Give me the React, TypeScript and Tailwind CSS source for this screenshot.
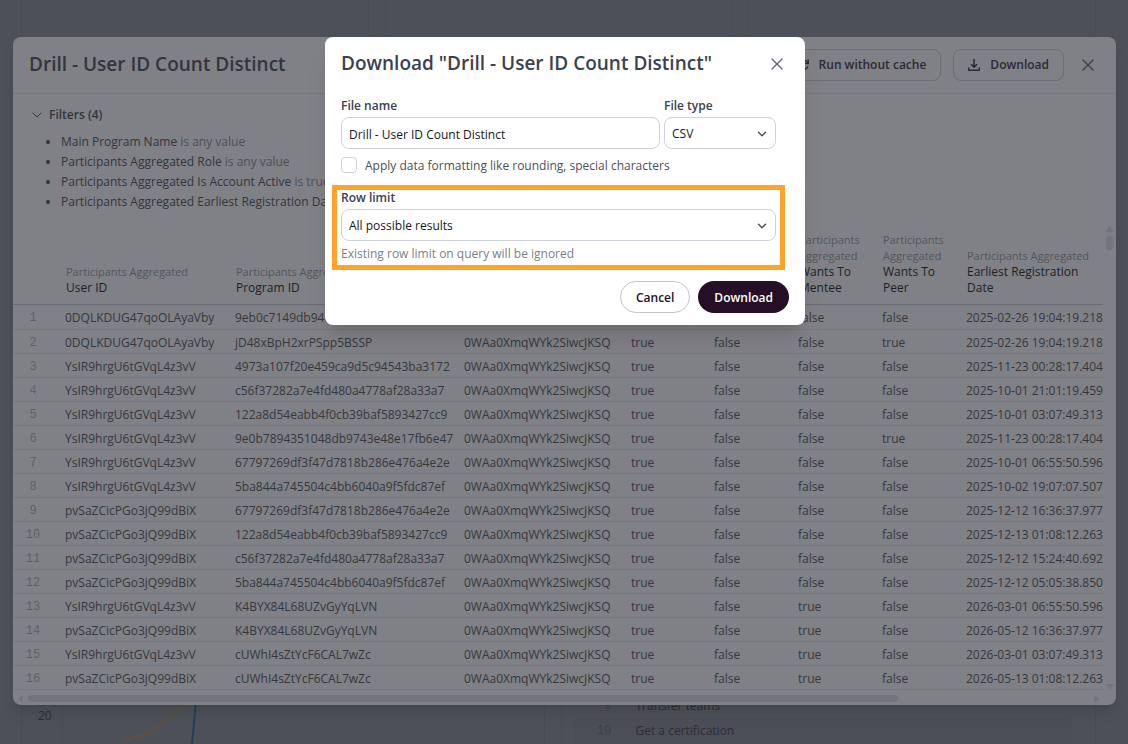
import React, { useState } from 'react';
import clsx from 'clsx';
import { X, ChevronDown } from 'lucide-react';

interface Row {
  user: string;
  program: string;
  mentee: boolean;
  peer: boolean;
  date: string;
}

interface Column {
  group?: string;
  label?: string;
  width: string;
}

const OWNER_ID = '0WAa0XmqWYk2SiwcJKSQ';

const columns: Column[] = [
  { group: 'Participants Aggregated', label: 'User ID', width: 'w-[170px]' },
  { group: 'Participants Aggregated', label: 'Program ID', width: 'w-[229px]' },
  { width: 'w-[167px]' },
  { width: 'w-[83px]' },
  { width: 'w-[84px]' },
  { group: 'Participants Aggregated', label: 'Wants To Mentee', width: 'w-[84px]' },
  { group: 'Participants Aggregated', label: 'Wants To Peer', width: 'w-[84px]' },
  { group: 'Participants Aggregated', label: 'Earliest Registration Date', width: '' },
];

const rows: Row[] = [
  { user: '0DQLKDUG47qoOLAyaVby', program: '9eb0c7149db946', mentee: false, peer: false, date: '2025-02-26 19:04:19.218' },
  { user: '0DQLKDUG47qoOLAyaVby', program: 'jD48xBpH2xrPSpp5BSSP', mentee: false, peer: true, date: '2025-02-26 19:04:19.218' },
  { user: 'YsIR9hrgU6tGVqL4z3vV', program: '4973a107f20e459ca9d5c94543ba3172', mentee: false, peer: false, date: '2025-11-23 00:28:17.404' },
  { user: 'YsIR9hrgU6tGVqL4z3vV', program: 'c56f37282a7e4fd480a4778af28a33a7', mentee: false, peer: false, date: '2025-10-01 21:01:19.459' },
  { user: 'YsIR9hrgU6tGVqL4z3vV', program: '122a8d54eabb4f0cb39baf5893427cc9', mentee: false, peer: false, date: '2025-10-01 03:07:49.313' },
  { user: 'YsIR9hrgU6tGVqL4z3vV', program: '9e0b7894351048db9743e48e17fb6e47', mentee: false, peer: true, date: '2025-11-23 00:28:17.404' },
  { user: 'YsIR9hrgU6tGVqL4z3vV', program: '67797269df3f47d7818b286e476a4e2e', mentee: false, peer: false, date: '2025-10-01 06:55:50.596' },
  { user: 'YsIR9hrgU6tGVqL4z3vV', program: '5ba844a745504c4bb6040a9f5fdc87ef', mentee: false, peer: false, date: '2025-10-02 19:07:07.507' },
  { user: 'pvSaZCicPGo3jQ99dBiX', program: '67797269df3f47d7818b286e476a4e2e', mentee: false, peer: false, date: '2025-12-12 16:36:37.977' },
  { user: 'pvSaZCicPGo3jQ99dBiX', program: '122a8d54eabb4f0cb39baf5893427cc9', mentee: false, peer: false, date: '2025-12-13 01:08:12.263' },
  { user: 'pvSaZCicPGo3jQ99dBiX', program: 'c56f37282a7e4fd480a4778af28a33a7', mentee: false, peer: false, date: '2025-12-12 15:24:40.692' },
  { user: 'pvSaZCicPGo3jQ99dBiX', program: '5ba844a745504c4bb6040a9f5fdc87ef', mentee: false, peer: false, date: '2025-12-12 05:05:38.850' },
  { user: 'YsIR9hrgU6tGVqL4z3vV', program: 'K4BYX84L68UZvGyYqLVN', mentee: true, peer: false, date: '2026-03-01 06:55:50.596' },
  { user: 'pvSaZCicPGo3jQ99dBiX', program: 'K4BYX84L68UZvGyYqLVN', mentee: true, peer: false, date: '2026-05-12 16:36:37.977' },
  { user: 'YsIR9hrgU6tGVqL4z3vV', program: 'cUWhI4sZtYcF6CAL7wZc', mentee: true, peer: false, date: '2026-03-01 03:07:49.313' },
  { user: 'pvSaZCicPGo3jQ99dBiX', program: 'cUWhI4sZtYcF6CAL7wZc', mentee: true, peer: false, date: '2026-05-13 01:08:12.263' },
];

const filters = [
  { field: 'Main Program Name', condition: 'is any value' },
  { field: 'Participants Aggregated Role', condition: 'is any value' },
  { field: 'Participants Aggregated Is Account Active', condition: 'is true' },
  { field: 'Participants Aggregated Earliest Registration Date', condition: '' },
];

const Dashboard: React.FC = () => (
  <div className="flex h-screen flex-col justify-between overflow-hidden pl-[21px] pr-8 text-xs text-[#2b2d34]">
    <div className="flex h-9 gap-4">
      <div className="flex-1 border-x border-[#4a4c54]" />
      <div className="flex-1 border-x border-[#4a4c54]" />
      <div className="flex-1 border-x border-[#4a4c54]" />
    </div>
    <div className="flex h-[44px] gap-4">
      <div className="flex flex-1 border-x border-[#4a4c54]">
        <span className="w-10 pt-2 pl-4 leading-4">20</span>
        <svg className="h-full w-[140px] border-l border-[#4a4c54]" viewBox="0 0 140 44" fill="none" aria-hidden="true">
          <path d="M62 44 71 36h9l12-6 8-8 7-4 8-8 15-7" stroke="#5e5238" strokeWidth="2" />
          <path d="M130 44 134 0" stroke="#1f405c" strokeWidth="2" />
        </svg>
      </div>
      <ol className="flex-1 border-x border-[#4a4c54] pl-3">
        <li className="flex h-[18px] items-end gap-6 pl-[22px]">
          <span className="w-4 text-right font-['Liberation_Mono'] leading-6 text-[#3d4047]">9</span>
          <span className="leading-6">Transfer teams</span>
        </li>
        <li className="mr-6 flex h-[26px] items-center gap-6 bg-[#4b4e56] pl-[22px]">
          <span className="w-4 text-right font-['Liberation_Mono'] text-[#3d4047]">10</span>
          <span>Get a certification</span>
        </li>
      </ol>
    </div>
  </div>
);

const DrillTable: React.FC = () => (
  <table className="w-full table-fixed border-collapse text-left">
    <thead>
      <tr className="h-[81px] border-b border-[#686b75] align-bottom leading-4">
        <th className="w-[44px]" aria-label="Row" />
        {columns.map((col, i) => (
          <th key={i} className={clsx('pb-2 pl-[9px] font-normal', col.width)}>
            <span className="block text-[11px] text-[#54565d]">{col.group}</span>
            <span className="block text-[#1d1f24]">{col.label}</span>
          </th>
        ))}
      </tr>
    </thead>
    <tbody className="text-[#35373d]">
      {rows.map((row, i) => (
        <tr key={i} className="h-6 border-b border-[#76787e] leading-4 first:h-[25px] *:pt-0.5">
          <td className="pr-1 text-center font-['Liberation_Mono'] text-[#5f6168]">{i + 1}</td>
          <td className="pl-2">{row.user}</td>
          <td className="pl-2">{row.program}</td>
          <td className="pl-2">{OWNER_ID}</td>
          <td className="pl-2">true</td>
          <td className="pl-2">false</td>
          <td className="pl-2">{String(row.mentee)}</td>
          <td className="pl-2">{String(row.peer)}</td>
          <td className="pl-2 whitespace-nowrap">{row.date}</td>
        </tr>
      ))}
    </tbody>
  </table>
);

const DrillModal: React.FC = () => (
  <div className="absolute inset-0 flex pt-[37px] pr-3 pb-[39px] pl-[13px]">
    <section aria-label="Drill results" className="flex min-w-0 flex-1 flex-col overflow-hidden rounded-lg bg-[#808186] text-xs text-[#33353d] shadow-lg">
      <header className="flex h-[57px] shrink-0 items-center justify-between border-b border-[#76787f] pr-[18px] pl-4">
        <h1 className="text-[19px] font-semibold">Drill - User ID Count Distinct</h1>
        <div className="flex items-center gap-3 font-semibold text-[#2d2935]">
          <button type="button" className="flex h-8 items-center gap-[10px] rounded-lg border border-[#6c6e76] px-[14px]">
            <svg className="size-3" viewBox="0 0 12 12" fill="none" stroke="currentColor" strokeWidth="1.5" aria-hidden="true">
              <path d="M10.700 7.500A5 5 0 1 1 10.300 3.500L11 4.500" />
              <path d="M11.200 0.500v4h-4" />
            </svg>
            Run without cache
          </button>
          <button type="button" className="flex h-8 items-center gap-[10px] rounded-lg border border-[#6c6e76] px-[14px]">
            <svg className="size-3" viewBox="0 0 12 12" fill="none" stroke="currentColor" strokeWidth="1.5" strokeLinejoin="round" aria-hidden="true">
              <path d="M6 0v8M3 5.200 6 8.200 9 5.200M0.800 8.500v2.700h10.400V8.500" />
            </svg>
            Download
          </button>
          <button type="button" aria-label="Close drill" className="ml-[2px] text-[#3a3d45]">
            <X className="size-5" strokeWidth={1.5} />
          </button>
        </div>
      </header>
      <div className="flex-1 px-4 pt-3">
        <button type="button" className="flex items-center gap-1 font-semibold leading-[18px]">
          <ChevronDown className="size-4" strokeWidth={1.5} />
          Filters (4)
        </button>
        <ul className="list-disc pt-2 pl-8 leading-5">
          {filters.map(f => (
            <li key={f.field}>
              {f.field} <span className="text-[#4d5058]">{f.condition}</span>
            </li>
          ))}
        </ul>
      </div>
      <div className="flex shrink-0">
        <div className="min-w-0 flex-1">
          <DrillTable />
        </div>
        <div className="flex w-[13px] flex-col items-center justify-between text-[#73757e]">
          <div className="flex flex-col items-center gap-1 pt-0.5">
            <svg className="h-[6px] w-2" viewBox="0 0 8 6" fill="currentColor" aria-hidden="true"><path d="M4 0 8 6H0z" /></svg>
            <div className="h-[14px] w-[7px] rounded-full bg-current" />
          </div>
          <svg className="h-[6px] w-2" viewBox="0 0 8 6" fill="currentColor" aria-hidden="true"><path d="M4 6 8 0H0z" /></svg>
        </div>
      </div>
      <div className="flex h-[15px] shrink-0 items-center gap-[5px] pt-0.5 pr-4 pl-1 text-[#73757e]">
        <svg className="h-2 w-[6px]" viewBox="0 0 6 8" fill="currentColor" aria-hidden="true"><path d="M0 4 6 0v8z" /></svg>
        <div className="flex-1">
          <div className="h-[7px] w-[82%] rounded-full bg-current" />
        </div>
        <svg className="h-2 w-[6px]" viewBox="0 0 6 8" fill="currentColor" aria-hidden="true"><path d="M6 4 0 0v8z" /></svg>
      </div>
    </section>
  </div>
);

const selectClass = 'h-8 w-full appearance-none rounded-lg border border-[#ced1dc] bg-white px-[7px] pt-0.5 text-[#15171c]';
const chevronClass = 'pointer-events-none absolute top-[10px] right-[7px] size-[14px] text-[#4c535b]';

const DownloadDialog: React.FC = () => {
  const [fileName, setFileName] = useState<string>('Drill - User ID Count Distinct');
  const [formatted, setFormatted] = useState<boolean>(false);

  return (
    <div className="absolute inset-0 flex items-start justify-center pt-[37px] pl-[2px]">
      <form
        role="dialog"
        aria-labelledby="download-title"
        onSubmit={e => e.preventDefault()}
        className="w-[480px] rounded-lg bg-white px-4 pb-3 text-xs text-[#4c4f5a] shadow-xl"
      >
        <div className="flex h-[54px] items-center justify-between pr-[2px]">
          <h2 id="download-title" className="text-[19px] font-semibold text-[#3a4150]">Download "Drill - User ID Count Distinct"</h2>
          <button type="button" aria-label="Close" className="text-[#5a6472]">
            <X className="size-5" strokeWidth={1.5} />
          </button>
        </div>
        <div className="pt-[7px] pr-[13px]">
          <div className="flex gap-1">
            <div className="flex-1">
              <label htmlFor="file-name" className="mb-[3px] block font-semibold leading-4 text-[#3a4150]">File name</label>
              <input
                id="file-name"
                type="text"
                value={fileName}
                onChange={e => setFileName(e.target.value)}
                className="h-8 w-full rounded-lg border border-[#ced1dc] px-[7px] pt-0.5 text-[#15171c]"
              />
            </div>
            <div className="w-28">
              <label htmlFor="file-type" className="mb-[3px] block font-semibold leading-4 text-[#3a4150]">File type</label>
              <div className="relative">
                <select id="file-type" className={selectClass}>
                  <option>CSV</option>
                </select>
                <ChevronDown className={chevronClass} strokeWidth={2.5} />
              </div>
            </div>
          </div>
          <label className="mt-2 flex h-4 items-center gap-2">
            <input
              type="checkbox"
              checked={formatted}
              onChange={e => setFormatted(e.target.checked)}
              className="size-4 appearance-none rounded border border-[#ced1dc] checked:bg-[#240f26]"
            />
            <span className="pt-0.5">Apply data formatting like rounding, special characters</span>
          </label>
          <div className="relative mt-[17px]">
            <div className="pointer-events-none absolute -top-[5px] -right-[9px] -bottom-2 -left-[9px] border-5 border-[#ffa32b]" />
            <label htmlFor="row-limit" className="mb-[3px] block font-semibold leading-4 text-[#3a4150]">Row limit</label>
            <div className="relative">
              <select id="row-limit" className={selectClass}>
                <option>All possible results</option>
              </select>
              <ChevronDown className={chevronClass} strokeWidth={2.5} />
            </div>
            <p className="mt-[5px] leading-4 text-[#7b7f88]">Existing row limit on query will be ignored</p>
          </div>
        </div>
        <div className="mt-[19px] flex justify-end gap-2 font-semibold">
          <button type="button" className="h-8 rounded-full border border-[#c1c6cc] px-[15px] pt-0.5 text-[#240f26]">Cancel</button>
          <button type="submit" className="h-8 rounded-full bg-[#240f26] px-4 pt-0.5 text-white">Download</button>
        </div>
      </form>
    </div>
  );
};

const App: React.FC = () => (
  <main className="relative min-h-screen overflow-hidden bg-[#4d5058] font-['Open_Sans',sans-serif]">
    <Dashboard />
    <DrillModal />
    <DownloadDialog />
  </main>
);

export default App;
